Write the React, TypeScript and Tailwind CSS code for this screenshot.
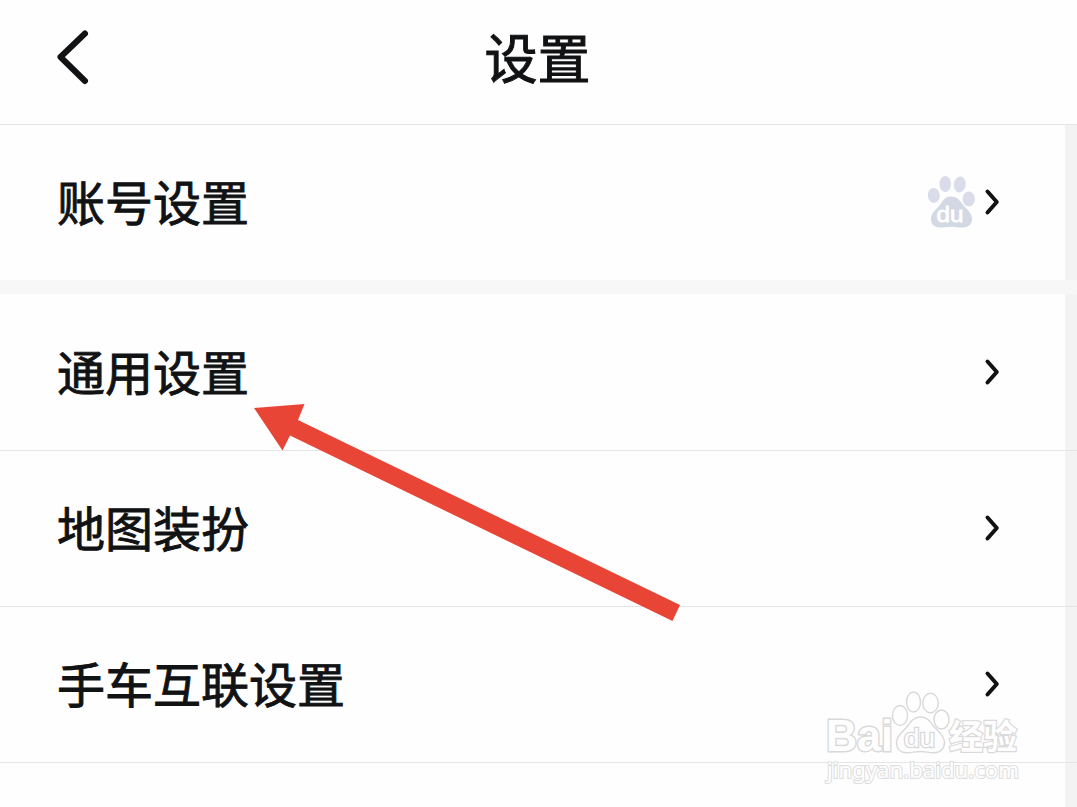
type Item = {
  label: string;
  paw?: boolean;
};

const items: Item[] = [
  { label: "通用设置" },
  { label: "地图装扮" },
  { label: "手车互联设置" },
];

function BackIcon() {
  return (
    <svg width="40" height="60" viewBox="0 0 40 60" fill="none">
      <path
        d="M33 6.5 L8.5 30 L33 54"
        stroke="#111214"
        strokeWidth="6"
        strokeLinecap="round"
        strokeLinejoin="round"
      />
    </svg>
  );
}

function ChevronIcon() {
  return (
    <svg width="16" height="28" viewBox="0 0 16 28" fill="none">
      <path
        d="M3.5 3.5 L12.8 14 L3.5 24.5"
        stroke="#111214"
        strokeWidth="4"
        strokeLinecap="round"
        strokeLinejoin="round"
      />
    </svg>
  );
}

function PawIcon() {
  return (
    <svg width="48" height="54" viewBox="0 0 48 54">
      <g fill="#dbdce9">
        <ellipse cx="6.8" cy="20.5" rx="6" ry="7.5" transform="rotate(-6 6.8 20.5)" />
        <ellipse cx="18.2" cy="9" rx="5.8" ry="8" />
        <ellipse cx="32.8" cy="9.5" rx="6" ry="8" transform="rotate(8 32.8 9.5)" />
        <ellipse cx="41.8" cy="24" rx="6.2" ry="7.6" />
      </g>
      <path
        fill="#d3d8e5"
        d="M24 21.5c5 0 8.300 2.800 11 7 3 4.600 10 8.500 10 15.500 0 5.500-4 8.500-9 8.500-4 0-7-.8-11.500-.8s-7.500.8-11.500.8c-5.500 0-9-3-9-8.500 0-7 7-10.500 10-15.500 2.500-4.200 5-7 10-7z"
      />
      <text
        x="9.5"
        y="47"
        textLength="27"
        lengthAdjust="spacingAndGlyphs"
        fill="#fff"
        stroke="#fff"
        strokeWidth="0.8"
        fontFamily="Liberation Sans, sans-serif"
        fontSize="22"
      >
        du
      </text>
    </svg>
  );
}

function Row({ label, paw }: Item) {
  return (
    <div className="flex h-[155px] items-center justify-between border-r-[12px] border-[#f3f3f3] pr-[65px] pb-px pl-[57px]">
      <span className="pb-[5px] text-[48px] leading-[70px] whitespace-nowrap [-webkit-text-stroke:0.9px_#111214]">
        {label}
      </span>
      <div className="flex items-center gap-[9px]">
        {paw && <PawIcon />}
        <ChevronIcon />
      </div>
    </div>
  );
}

function Watermark() {
  return (
    <svg
      className="absolute top-[680px] left-[815px]"
      width="215"
      height="110"
      viewBox="815 680 215 110"
      fill="#fefefe"
      stroke="#d9d9d9"
      strokeWidth="1.4"
    >
      <text
        x="826"
        y="751"
        fontFamily="Liberation Sans, sans-serif"
        fontSize="45"
        fontWeight="700"
        textLength="67"
        lengthAdjust="spacingAndGlyphs"
        strokeWidth="3"
        paintOrder="stroke"
      >
        Bai
      </text>
      <ellipse cx="900" cy="715.5" rx="7.5" ry="10" />
      <ellipse cx="913.5" cy="702" rx="7" ry="10" />
      <ellipse cx="930.5" cy="703" rx="7.8" ry="9.8" />
      <ellipse cx="941.5" cy="719.5" rx="7.5" ry="9.5" />
      <path d="M920.5 717c6 0 9.5 3.5 12.5 8.500 3 4.500 11.500 9 11.500 17 0 6.500-4.500 10.300-10.500 10.300-5 0-8.500-1.300-13.500-1.300s-8.500 1.300-13.500 1.300c-6.500 0-10.500-3.800-10.500-10.300 0-8 8-11.500 11.500-17 3-5 6.500-8.500 12.500-8.500z" />
      <text
        x="904"
        y="746.5"
        fontFamily="Liberation Sans, sans-serif"
        fontSize="26"
        textLength="31"
        lengthAdjust="spacingAndGlyphs"
        strokeWidth="2.6"
        paintOrder="stroke"
      >
        du
      </text>
      <text
        x="949"
        y="749"
        fontFamily="Noto Sans CJK SC, sans-serif"
        fontSize="34"
        fontWeight="700"
        strokeWidth="2.4"
        paintOrder="stroke"
      >
        经验
      </text>
      <text
        x="827"
        y="778"
        fontFamily="Noto Sans, sans-serif"
        fontSize="22"
        textLength="192"
        lengthAdjust="spacingAndGlyphs"
        stroke="#dedede"
        strokeWidth="2.2"
        paintOrder="stroke"
      >
        jingyan.baidu.com
      </text>
    </svg>
  );
}

function Arrow() {
  return (
    <svg
      className="absolute top-[400px] left-[250px]"
      width="435"
      height="225"
      viewBox="250 400 435 225"
    >
      <path
        fill="#e94537"
        d="M254 408 L304.5 404 L298 420 L680 605 L672.5 621 L290 435.5 L282.5 450.5 Z"
      />
    </svg>
  );
}

export default function App() {
  return (
    <div className="relative flex h-[807px] w-[1077px] flex-col overflow-hidden bg-[#fefefe] font-['Noto_Sans_CJK_SC',sans-serif] text-[#111214]">
      <header className="grid h-[125px] shrink-0 grid-cols-[1fr_auto_1fr] border-b border-[#e5e5e5]">
        <div className="pt-[27px] pl-[52px]">
          <BackIcon />
        </div>
        <h1 className="pt-[17px] pr-[2px] text-[53px] leading-[78px] [-webkit-text-stroke:1px_#111214]">
          设置
        </h1>
      </header>

      <Row label="账号设置" paw />
      <div className="h-[14px] shrink-0 bg-[#f7f7f7]" />
      <div className="h-px shrink-0 border-r-[12px] border-[#f3f3f3]" />
      <div className="divide-y divide-[#e5e5e5] border-b border-[#e5e5e5]">
        {items.map((item) => (
          <div key={item.label}>
            <Row {...item} />
          </div>
        ))}
      </div>
      <div className="flex-1 border-r-[12px] border-[#f3f3f3]" />

      <Arrow />
      <Watermark />
    </div>
  );
}
